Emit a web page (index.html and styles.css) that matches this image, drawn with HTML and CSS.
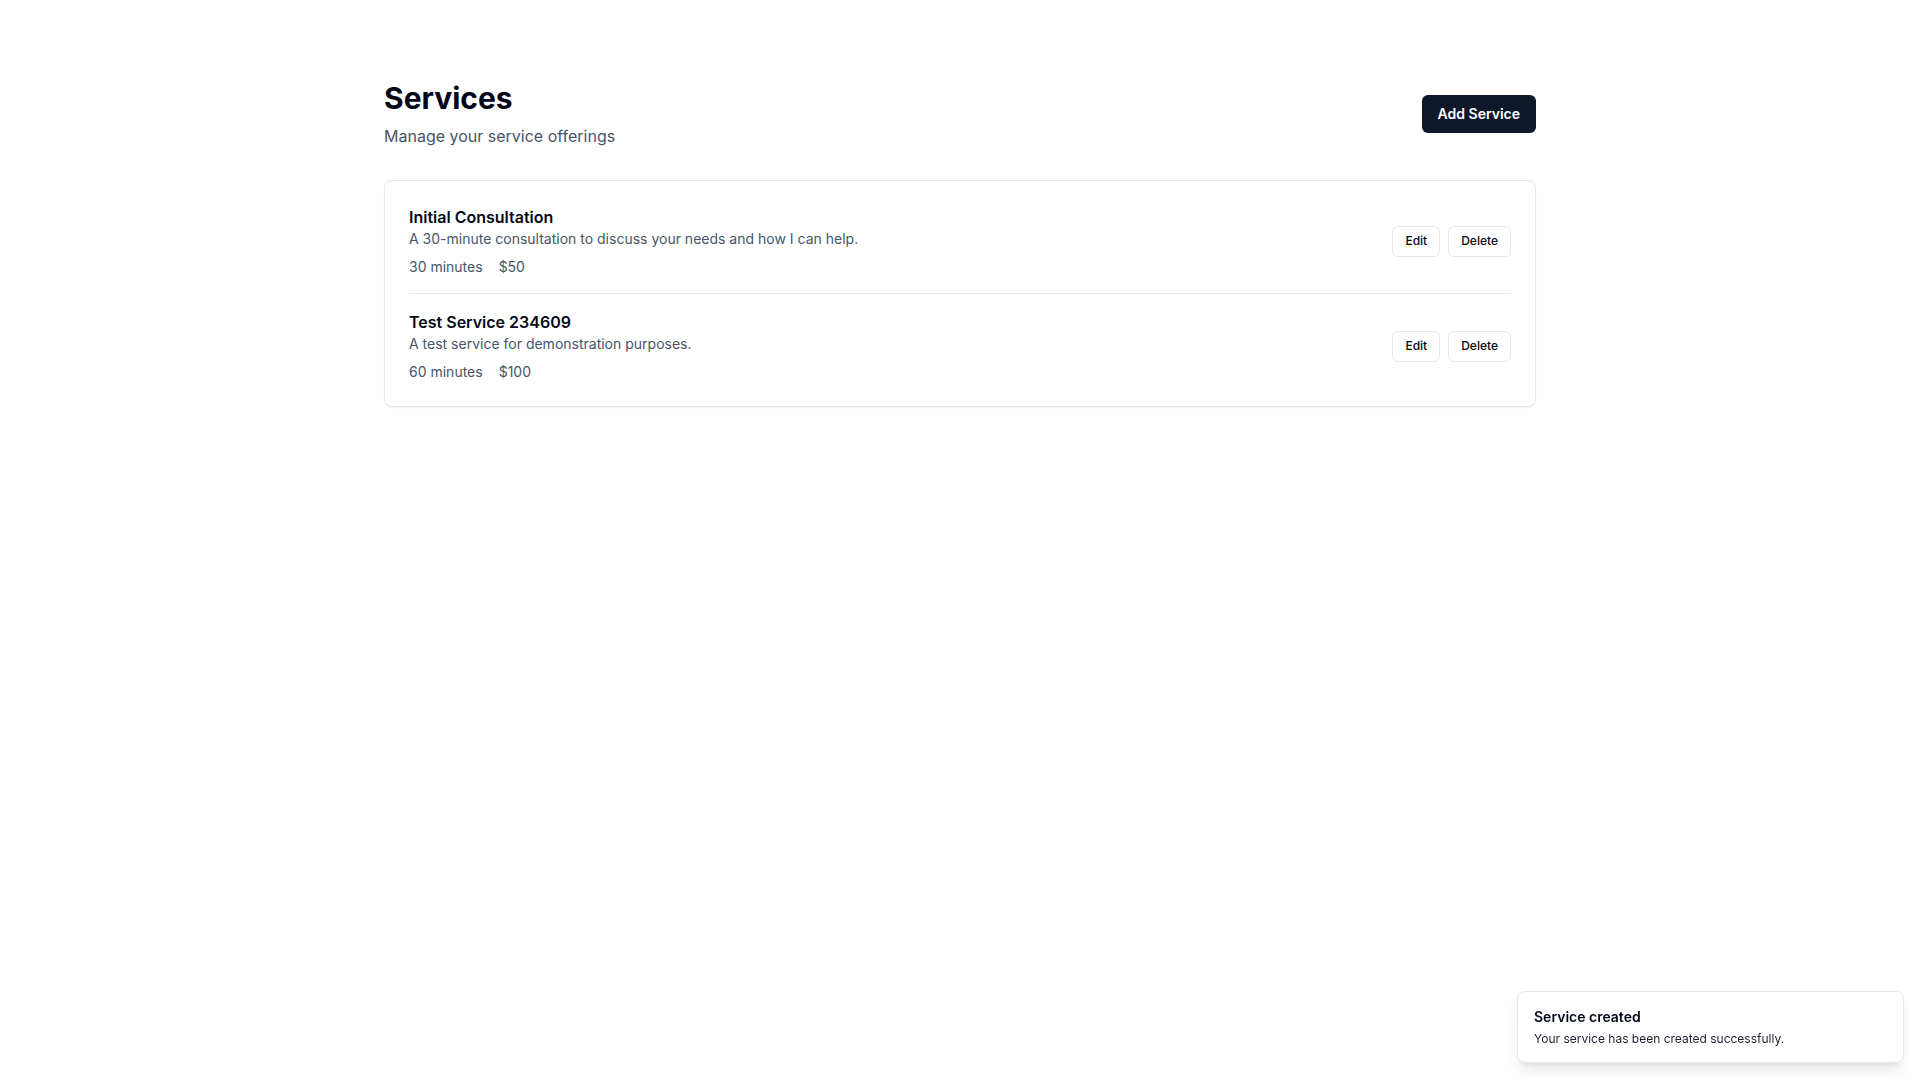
FILE: index.html
```html
<!DOCTYPE html>
<html lang="en">
<head>
<meta charset="utf-8">
<title>Services</title>
<link rel="stylesheet" href="styles.css">
</head>
<body>
<main class="page">
  <header class="page-header">
    <div class="heading">
      <h1 class="title">Services</h1>
      <p class="subtitle">Manage your service offerings</p>
    </div>
    <button class="btn-primary" type="button">Add Service</button>
  </header>

  <section class="card">
    <div class="service">
      <div class="service-info">
        <h3 class="service-name">Initial Consultation</h3>
        <p class="service-desc">A 30-minute consultation to discuss your needs and how I can help.</p>
        <div class="service-meta">
          <span>30 minutes</span>
          <span>$50</span>
        </div>
      </div>
      <div class="service-actions">
        <button class="btn-outline" type="button">Edit</button>
        <button class="btn-outline" type="button">Delete</button>
      </div>
    </div>
    <div class="service">
      <div class="service-info">
        <h3 class="service-name">Test Service 234609</h3>
        <p class="service-desc">A test service for demonstration purposes.</p>
        <div class="service-meta">
          <span>60 minutes</span>
          <span>$100</span>
        </div>
      </div>
      <div class="service-actions">
        <button class="btn-outline" type="button">Edit</button>
        <button class="btn-outline" type="button">Delete</button>
      </div>
    </div>
  </section>
</main>

<div class="toast" role="status">
  <div class="toast-title">Service created</div>
  <div class="toast-desc">Your service has been created successfully.</div>
</div>
</body>
</html>
```

FILE: styles.css
```css
* {
  box-sizing: border-box;
}

html, body {
  margin: 0;
  padding: 0;
  background: #ffffff;
}

body {
  font-family: Inter, "Liberation Sans", Arial, sans-serif;
  color: #020817;
  -webkit-font-smoothing: antialiased;
}

.page {
  max-width: 1152px;
  margin: 0 auto;
  padding: 80px 0 32px;
}

.page-header {
  display: flex;
  justify-content: space-between;
  align-items: center;
  margin-bottom: 32px;
}

.title {
  margin: 0;
  font-size: 30px;
  line-height: 36px;
  font-weight: 700;
  color: #020817;
}

.subtitle {
  margin: 8px 0 0;
  font-size: 16px;
  line-height: 24px;
  color: #475569;
}

.btn-primary {
  height: 38px;
  padding: 0 16px;
  border: none;
  border-radius: 6px;
  background: #0f172a;
  color: #ffffff;
  font-family: inherit;
  font-size: 14px;
  font-weight: 600;
  line-height: 20px;
}

.card {
  border: 1px solid #e2e8f0;
  border-radius: 8px;
  background: #ffffff;
  box-shadow: 0 1px 2px rgba(0, 0, 0, 0.05);
  padding: 24px;
}

.service {
  display: flex;
  justify-content: space-between;
  align-items: center;
  padding: 16px 0;
}

.service + .service {
  border-top: 1px solid #e2e8f0;
}

.service:first-child {
  padding-top: 0;
}

.service:last-child {
  padding-bottom: 0;
}

.service-name {
  margin: 0;
  font-size: 16px;
  line-height: 24px;
  font-weight: 600;
  color: #020817;
}

.service-desc {
  margin: 0;
  font-size: 14px;
  line-height: 20px;
  color: #475569;
}

.service-meta {
  display: flex;
  gap: 16px;
  margin-top: 8px;
  font-size: 14px;
  line-height: 20px;
  color: #475569;
}

.service-actions {
  display: flex;
  gap: 8px;
}

.btn-outline {
  height: 31px;
  padding: 0 12px;
  border: 1px solid #e2e8f0;
  border-radius: 6px;
  background: #ffffff;
  color: #020817;
  font-family: inherit;
  font-size: 12px;
  font-weight: 500;
  line-height: 16px;
}

.toast {
  position: fixed;
  right: 16px;
  bottom: 17px;
  width: 387px;
  padding: 15px 16px;
  border: 1px solid #e2e8f0;
  border-radius: 8px;
  background: #ffffff;
  box-shadow: 0 10px 15px -3px rgba(0, 0, 0, 0.1), 0 4px 6px -4px rgba(0, 0, 0, 0.1);
}

.toast-title {
  font-size: 14px;
  line-height: 20px;
  font-weight: 600;
  color: #020817;
}

.toast-desc {
  margin-top: 4px;
  font-size: 12px;
  line-height: 16px;
  color: #020817;
  opacity: 0.9;
}
```
